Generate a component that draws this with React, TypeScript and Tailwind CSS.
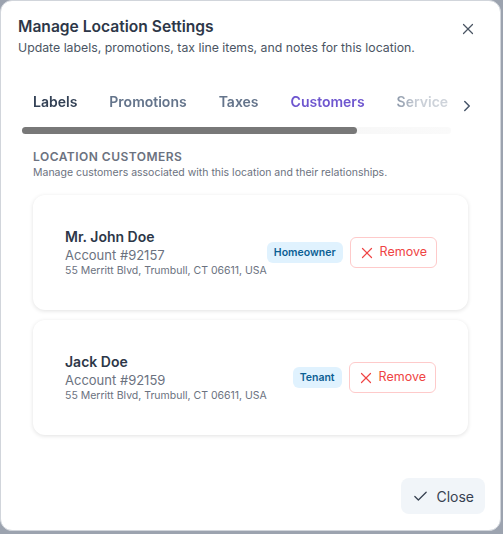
import React from "react";

const font = { fontFamily: "Inter, 'Noto Sans', sans-serif" };

function XIcon({ className, sw = 2 }: { className?: string; sw?: number }) {
  return (
    <svg viewBox="0 0 24 24" fill="none" stroke="currentColor" strokeWidth={sw} strokeLinecap="round" strokeLinejoin="round" className={className}>
      <path d="M18 6 6 18" />
      <path d="m6 6 12 12" />
    </svg>
  );
}

function Card({ name, account, badge }: { name: string; account: string; badge: string }) {
  return (
    <div className="flex items-center justify-between rounded-xl bg-white pl-8 pr-8 h-[115px] shadow-[0_1px_4px_rgba(0,0,0,0.12)]">
      <div className="flex flex-col whitespace-nowrap">
        <div className="text-[14px] font-semibold text-[#2d3748] leading-[19px]">{name}</div>
        <div className="text-[13px] text-[#6b7280] leading-[18px]">{account}</div>
        <div className="text-[10.5px] text-[#6b7280] leading-[14px]">55 Merritt Blvd, Trumbull, CT 06611, USA</div>
      </div>
      <div className="flex items-center gap-[7px]">
        <span className="rounded-md bg-[#e0f2fe] px-[7px] h-[21px] flex items-center text-[10.5px] font-semibold text-[#0c5f94]">{badge}</span>
        <button className="flex items-center gap-[4px] h-[31px] rounded-md border border-[#fecaca] bg-white pl-[7px] pr-[9px] text-[12.5px] text-[#ef4444]">
          <XIcon className="w-[18px] h-[18px]" sw={1.6} />
          Remove
        </button>
      </div>
    </div>
  );
}

export default function App() {
  return (
    <div className="w-[503px] h-[534px] bg-[#9ca3af]" style={font}>
      <div className="relative w-[501px] h-[531px] bg-white rounded-[12px] border border-[#d1d5db] flex flex-col">
        <button className="absolute right-[23px] top-[19px] text-[#4b5563]">
          <XIcon className="w-[18px] h-[18px]" sw={1.6} />
        </button>
        <div className="pl-[17px] pt-[15px]">
          <h2 className="text-[15.6px] font-semibold text-[#2d3748] leading-[22px]">Manage Location Settings</h2>
          <p className="text-[12.3px] text-[#4b5563] leading-[18px] mt-[1px]">Update labels, promotions, tax line items, and notes for this location.</p>
        </div>
        <div className="flex items-start mt-[35px] pl-[16px]">
          <div className="w-[435px] flex flex-col">
            <div
              className="flex whitespace-nowrap overflow-hidden text-[14px] font-semibold leading-[20px]"
              style={{ WebkitMaskImage: "linear-gradient(to right, black 84%, rgba(0,0,0,0.35) 92%, rgba(0,0,0,0.3) 100%)" }}
            >
              <span className="px-4 text-[#334155]">Labels</span>
              <span className="px-4 text-[#64748b]">Promotions</span>
              <span className="px-4 text-[#64748b]">Taxes</span>
              <span className="px-4 text-[#6e56cf]">Customers</span>
              <span className="px-4 text-[#64748b]">Service</span>
            </div>
            <div className="mt-[15px] ml-[5px] h-[7px] w-[429px] rounded-full bg-gradient-to-r from-[#efefef] to-[#fafafa] relative">
              <div className="absolute left-0 top-0 h-[7px] w-[335px] rounded-full bg-[#787878]" />
            </div>
          </div>
          <button className="ml-[6px] mt-[5px] text-[#475569]">
            <svg viewBox="0 0 24 24" fill="none" stroke="currentColor" strokeWidth={2} strokeLinecap="round" strokeLinejoin="round" className="w-[18px] h-[18px]">
              <path d="m9 18 6-6-6-6" />
            </svg>
          </button>
        </div>
        <div className="px-[32px] mt-[15px]">
          <div className="text-[12px] font-semibold tracking-[0.04em] text-[#6b7280] leading-[16px]">LOCATION CUSTOMERS</div>
          <div className="text-[10.5px] text-[#6b7280] leading-[14px] mt-[1px]">Manage customers associated with this location and their relationships.</div>
          <div className="flex flex-col gap-[10px] mt-[15px]">
            <Card name="Mr. John Doe" account="Account #92157" badge="Homeowner" />
            <Card name="Jack Doe" account="Account #92159" badge="Tenant" />
          </div>
        </div>
        <div className="flex justify-end pr-[15px] mt-auto mb-[16px]">
          <button className="flex items-center gap-[7px] h-[36px] rounded-lg bg-[#f1f5f9] px-[11px] text-[14px] text-[#374151]">
            <svg viewBox="0 0 24 24" fill="none" stroke="currentColor" strokeWidth={1.8} strokeLinecap="round" strokeLinejoin="round" className="w-[17px] h-[17px]">
              <path d="M20 6 9 17l-5-5" />
            </svg>
            Close
          </button>
        </div>
      </div>
    </div>
  );
}
